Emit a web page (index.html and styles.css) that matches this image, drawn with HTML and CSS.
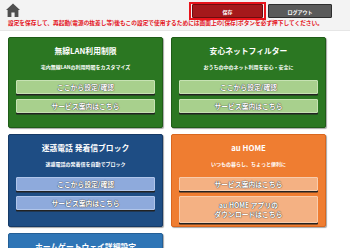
FILE: index.html
```html
<!DOCTYPE html>
<html lang="ja">
<head>
<meta charset="utf-8">
<link rel="stylesheet" href="styles.css">
</head>
<body>
<header class="header">
  <div class="header-top">
    <svg class="home-icon" viewBox="0 0 14 14" width="14" height="14">
      <path d="M7 0.5 L0 7 L1.6 7 L1.6 14 L5.4 14 L5.4 9.5 L8.6 9.5 L8.6 14 L12.4 14 L12.4 7 L14 7 Z" fill="#4f4f4f"/>
    </svg>
    <div class="actions">
      <span class="save-wrap"><span class="btn save">保存</span></span>
      <span class="btn logout">ログアウト</span>
    </div>
  </div>
  <p class="note">設定を保存して、再起動(電源の抜差し等)後もこの設定で使用するためには画面上の[保存]ボタンを必ず押下してください。</p>
</header>
<main class="grid">
  <section class="card green">
    <h2 class="title">無線LAN利用制限</h2>
    <p class="sub">宅内無線LANの利用時間をカスタマイズ</p>
    <div class="btns">
      <span class="cbtn">ここから設定/確認</span>
      <span class="cbtn">サービス案内はこちら</span>
    </div>
  </section>
  <section class="card green">
    <h2 class="title">安心ネットフィルター</h2>
    <p class="sub">おうちの中のネット利用を安心・安全に</p>
    <div class="btns">
      <span class="cbtn">ここから設定/確認</span>
      <span class="cbtn">サービス案内はこちら</span>
    </div>
  </section>
  <section class="card navy">
    <h2 class="title">迷惑電話 発着信ブロック</h2>
    <p class="sub">迷惑電話の発着信を自動でブロック</p>
    <div class="btns">
      <span class="cbtn">ここから設定/確認</span>
      <span class="cbtn">サービス案内はこちら</span>
    </div>
  </section>
  <section class="card orange">
    <h2 class="title">au HOME</h2>
    <p class="sub">いつもの暮らし、ちょっと便利に</p>
    <div class="btns">
      <span class="cbtn">サービス案内はこちら</span>
      <span class="cbtn two">au HOME アプリの<br>ダウンロードはこちら</span>
    </div>
  </section>
  <section class="card blue">
    <h2 class="title">ホームゲートウェイ詳細設定</h2>
  </section>
</main>
</body>
</html>
```
FILE: styles.css
```css
* { box-sizing: border-box; }
html, body { margin: 0; padding: 0; }
body {
  width: 350px;
  height: 248px;
  overflow: hidden;
  background: #ffffff;
  font-family: "Noto Sans CJK JP", "Noto Sans", sans-serif;
}
.header {
  background: #f3f3f3;
  height: 31px;
  border-bottom: 1px solid #e6e6e6;
}
.header-top {
  display: flex;
  justify-content: space-between;
  align-items: flex-start;
  padding: 3px 18px 0 6px;
  height: 19px;
}
.home-icon { display: block; }
.actions {
  display: flex;
  align-items: center;
  gap: 2px;
  margin-top: -1px;
}
.save-wrap {
  display: block;
  border: 2px solid #e8141b;
  padding: 0;
}
.btn {
  display: flex;
  align-items: center;
  justify-content: center;
  height: 14px;
  color: #fff;
  font-size: 5px;
  font-weight: 700;
  border-radius: 1px;
}
.save {
  width: 71px;
  background: #a5191b;
  border: 1px solid #6e0d0e;
  margin: 0 1px;
}
.logout {
  width: 64px;
  background: #5a5a5a;
  border: 1px solid #2d2d2d;
}
.note {
  margin: 0;
  padding-left: 8px;
  color: #e4141c;
  font-size: 5.7px;
  font-weight: 700;
  line-height: 7px;
  white-space: nowrap;
}
.grid {
  display: grid;
  grid-template-columns: 155px 155px;
  gap: 6px 8px;
  padding: 6px 0 0 8px;
}
.card {
  min-height: 91px;
  padding: 8px 7px 3px;
  color: #fff;
  border-radius: 2px;
  box-shadow: 1px 1px 1px rgba(0,0,0,0.35);
  text-align: center;
}
.green { background: #2b7722; border: 1px solid #1f5c18; }
.navy { background: #1e4d84; border: 1px solid #163a66; }
.orange { background: #ef7d31; border: 1px solid #d9671f; }
.blue { background: #2e75b6; border: 1px solid #245f96; }
.title {
  margin: 0;
  font-size: 7.8px;
  font-weight: 700;
  line-height: 10px;
}
.sub {
  margin: 7px 0 0;
  font-size: 5px;
  font-weight: 700;
  line-height: 7px;
}
.btns {
  display: flex;
  flex-direction: column;
  gap: 5px;
  margin-top: 10px;
}
.cbtn {
  display: flex;
  align-items: center;
  justify-content: center;
  min-height: 14px;
  color: #fff;
  font-size: 6.8px;
  font-weight: 700;
  line-height: 9px;
  border-radius: 1px;
  text-shadow: 0 0 1px #333, 0 0 1px #333;
  box-shadow: 0 1.5px 0 #222;
}
.cbtn.two { min-height: 27px; padding: 2px 0; }
.green .cbtn { background: #a8d08d; border: 1px solid #c6e2b3; }
.navy .cbtn { background: #8eaadc; border: 1px solid #b0c5ea; }
.orange .cbtn { background: #f4b183; border: 1px solid #f8ccad; }
```
